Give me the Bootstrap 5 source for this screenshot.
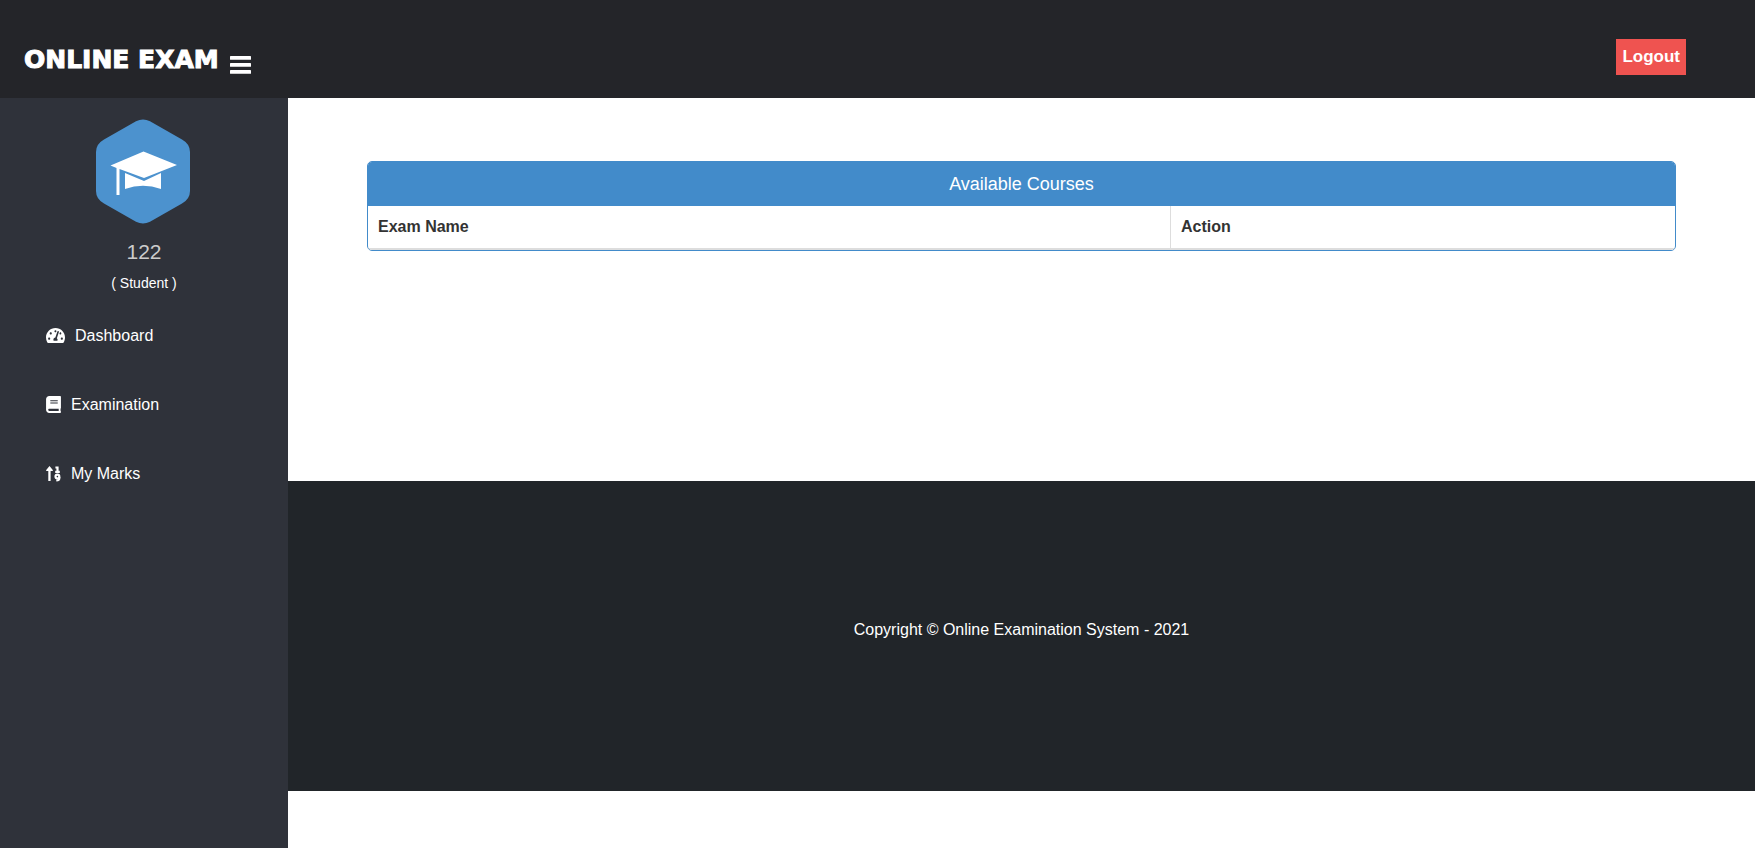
<!DOCTYPE html>
<html lang="en">
<head>
<meta charset="utf-8">
<meta name="viewport" content="width=device-width, initial-scale=1">
<title>Online Exam</title>
<link href="https://cdn.jsdelivr.net/npm/bootstrap@5.3.0/dist/css/bootstrap.min.css" rel="stylesheet">
<style>
  body { font-family: "Liberation Sans", Arial, sans-serif; font-size: 16px; line-height: 24px; color: #333; background: #fff; }
  .top-bar { background: #242529; padding: 38px 69px 19px 24px; }
  .brand-row { gap: 11px; }
  .brand-name { font-family: "Arial Black", "DejaVu Sans", sans-serif; font-weight: 900; font-size: 25px; line-height: 38px; color: #fff; padding-top: 3px; -webkit-text-stroke: 1px #fff; }
  .menu-toggle { width: 21px; height: 19px; }
  .menu-btn { padding: 18px 0 0; }
  .logout-btn { background: #ef5350; color: #fff; font-weight: 700; font-size: 17px; line-height: 24px; padding: 6px; margin-top: 1px; }
  .side-bar { width: 288px; background: #2f323a; padding-top: 21px; flex: none; }
  .user-name { font-size: 21px; line-height: 28px; color: #ccc; margin-top: 14px; font-weight: 400; }
  .user-role { font-size: 14px; line-height: 20px; color: #fff; margin-top: 7px; }
  .side-nav { padding-top: 8px; }
  .side-link { color: #fff; padding: 0 46px; height: 69px; gap: 10px; }
  .side-link:hover { background: #19b3d3; color: #fff; }
  .courses-area { padding: 63px 79px 0; min-height: 383px; }
  .courses-panel { border: 1px solid #428bca; border-radius: 5px; overflow: hidden; }
  .courses-title { background: #428bca; color: #fff; font-size: 18px; line-height: 24px; padding: 10px 15px; font-weight: 400; }
  .courses-table { --bs-table-color: #333; border-color: #ddd; }
  .courses-table th { padding: 9px 10px; border-bottom: 2px solid #ddd; }
  .courses-table th + th { border-left: 1px solid #ddd; }
  .exam-col { width: 61.4%; }
  .site-footer { background: #212529; color: #fff; padding: 137px 16px 149px; }
</style>
</head>
<body class="d-flex flex-column min-vh-100">
<header class="top-bar d-flex justify-content-between align-items-start">
  <div class="brand-row d-flex align-items-start">
    <h1 class="brand-name mb-0">ONLINE EXAM</h1>
    <button type="button" class="btn menu-btn border-0 d-flex" aria-label="Toggle menu">
      <svg class="menu-toggle" viewBox="0 0 21 19" fill="#fff" aria-hidden="true"><rect width="21" height="3.800" rx=".6"/><rect y="7" width="21" height="3.800" rx=".6"/><rect y="14" width="21" height="3.800" rx=".6"/></svg>
    </button>
  </div>
  <button type="button" class="btn logout-btn border-0 rounded-0">Logout</button>
</header>
<div class="d-flex flex-grow-1">
  <aside class="side-bar">
    <div class="text-center">
      <svg class="d-block mx-auto" width="96" height="105" viewBox="0 0 96 105" aria-hidden="true">
        <path fill="#4c92ce" d="M40 2.2Q47-1.4 54 2.2L86 20.5Q94 25 94 33V72Q94 80 86 84.5L54 102.8Q47 106.4 40 102.8L8 84.5Q0 80 0 72V33Q0 25 8 20.5Z"/>
        <path fill="#fff" d="M47.500 32.500L81 46 48 59 23.500 50V76H20.500V49L14.500 46.500ZM29 54L48 62 65 54V70Q47 63.500 29 70Z"/>
      </svg>
      <h2 class="user-name mb-0">122</h2>
      <div class="user-role">( Student )</div>
    </div>
    <nav class="side-nav d-flex flex-column">
      <a href="#" class="side-link d-flex align-items-center text-decoration-none">
        <svg width="19" height="17" viewBox="0 0 576 512" fill="#fff" aria-hidden="true"><path d="M288 32C128.940 32 0 160.940 0 320c0 52.800 14.250 102.260 39.060 144.800 5.610 9.620 16.300 15.200 27.440 15.200h443c11.140 0 21.830-5.580 27.440-15.200C561.750 422.260 576 372.800 576 320c0-159.060-128.940-288-288-288zm0 64c14.710 0 26.580 10.130 30.320 23.650-1.110 2.260-2.640 4.230-3.450 6.670l-9.220 27.670c-5.130 3.490-10.970 6.010-17.640 6.010-17.670 0-32-14.330-32-32S270.330 96 288 96zM96 384c-17.670 0-32-14.330-32-32s14.330-32 32-32 32 14.330 32 32-14.330 32-32 32zm48-160c-17.670 0-32-14.330-32-32s14.330-32 32-32 32 14.330 32 32-14.330 32-32 32zm246.770-72.410l-61.330 184C343.130 347.330 352 364.540 352 384c0 11.720-3.380 22.550-8.880 32H232.880c-5.500-9.450-8.880-20.280-8.880-32 0-33.940 26.500-61.430 59.900-63.590l61.340-184.010c4.170-12.560 17.730-19.450 30.360-15.170 12.570 4.190 19.350 17.790 15.170 30.360zm14.660 57.200l15.520-46.550c3.470-1.290 7.130-2.230 11.050-2.230 17.670 0 32 14.330 32 32s-14.330 32-32 32c-11.380-.010-20.890-6.280-26.570-15.220zM480 384c-17.670 0-32-14.330-32-32s14.330-32 32-32 32 14.330 32 32-14.330 32-32 32z"/></svg>
        <span>Dashboard</span>
      </a>
      <a href="#" class="side-link d-flex align-items-center text-decoration-none">
        <svg width="15" height="17" viewBox="0 0 448 512" fill="#fff" aria-hidden="true"><path d="M448 360V24c0-13.300-10.700-24-24-24H96C43 0 0 43 0 96v320c0 53 43 96 96 96h328c13.300 0 24-10.700 24-24v-16c0-7.500-3.500-14.300-8.900-18.700-4.200-15.400-4.200-59.300 0-74.700 5.400-4.300 8.900-11.100 8.900-18.600zM128 134c0-3.300 2.700-6 6-6h212c3.300 0 6 2.700 6 6v20c0 3.300-2.700 6-6 6H134c-3.300 0-6-2.700-6-6v-20zm0 64c0-3.300 2.700-6 6-6h212c3.300 0 6 2.700 6 6v20c0 3.300-2.700 6-6 6H134c-3.300 0-6-2.700-6-6v-20zm253.400 250H96c-17.700 0-32-14.300-32-32 0-17.600 14.400-32 32-32h285.400c-1.900 17.100-1.900 46.900 0 64z"/></svg>
        <span>Examination</span>
      </a>
      <a href="#" class="side-link d-flex align-items-center text-decoration-none">
        <svg width="15" height="16" viewBox="0 0 15 16" aria-hidden="true"><path fill="#fff" d="M3.500 0L7 4.200Q7 5 6.200 5H4.600V15H2.300V5H.8Q0 5 0 4.200Z"/><path fill="none" stroke="#fff" stroke-width="2.200" d="M9.400 1.500H11.500V6M9.200 5.800H13.800M13.300 11V12.500Q13.200 14.300 10.300 14.500"/><circle cx="11.400" cy="10.600" r="1.900" fill="none" stroke="#fff" stroke-width="2.200"/></svg>
        <span>My Marks</span>
      </a>
    </nav>
  </aside>
  <div class="flex-grow-1">
    <main class="courses-area">
      <section class="courses-panel">
        <h2 class="courses-title text-center m-0">Available Courses</h2>
        <table class="table courses-table mb-0">
          <thead><tr><th scope="col" class="exam-col">Exam Name</th><th scope="col">Action</th></tr></thead>
        </table>
      </section>
    </main>
    <footer class="site-footer text-center">Copyright © Online Examination System - 2021</footer>
  </div>
</div>
<script src="https://cdn.jsdelivr.net/npm/bootstrap@5.3.0/dist/js/bootstrap.bundle.min.js"></script>
</body>
</html>
